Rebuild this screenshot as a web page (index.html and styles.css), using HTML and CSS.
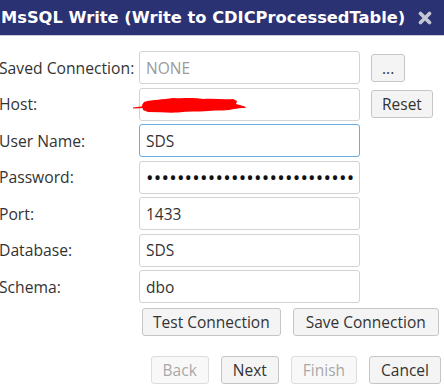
FILE: index.html
```html
<!DOCTYPE html>
<html>
<head>
<meta charset="utf-8">
<link rel="stylesheet" href="styles.css">
</head>
<body>
<div class="dialog">
  <div class="titlebar">
    <span class="title">MsSQL Write (Write to CDICProcessedTable)</span>
    <svg class="close" width="14" height="14" viewBox="0 0 14 14"><path d="M2.5 2.5 L11.5 11.5 M11.5 2.5 L2.5 11.5" stroke="#c4c7d3" stroke-width="3.6" stroke-linecap="round"/></svg>
  </div>
  <div class="form">
    <label class="lbl">Saved Connection:</label>
    <input class="field" type="text" placeholder="NONE">
    <button class="btn btn-small">...</button>

    <label class="lbl">Host:</label>
    <div class="host">
      <input class="field" type="text">
      <svg class="redact" width="114" height="22" viewBox="0 0 114 22"><path d="M0 13.5 C 4 13, 8 12.5, 12 12 L 12 14 C 8 14, 4 14.5, 0 14.5 Z" fill="#ff0000"/><path d="M11 8 C 20 5, 30 6, 40 4 C 50 5, 60 3, 70 5 C 80 4, 90 6, 100 5 L 104 7 L 103 10 C 107 11, 110 12, 113 13 L 112 14 C 108 14, 104 14.5, 101 15 C 95 17, 85 16, 75 17 C 65 18, 55 17, 45 18.5 C 35 19, 25 18, 15 18 L 10 16 L 9 11 Z" fill="#ff0000"/></svg>
    </div>
    <button class="btn btn-small">Reset</button>

    <label class="lbl">User Name:</label>
    <input class="field focused" type="text" value="SDS" autofocus>
    <span></span>

    <label class="lbl">Password:</label>
    <input class="field pw" type="password" value="abcdefghijklmnopqrstuvwxyz1">
    <span></span>

    <label class="lbl">Port:</label>
    <input class="field" type="text" value="1433">
    <span></span>

    <label class="lbl">Database:</label>
    <input class="field" type="text" value="SDS">
    <span></span>

    <label class="lbl">Schema:</label>
    <input class="field" type="text" value="dbo">
    <span></span>
  </div>
  <div class="conn-actions">
    <button class="btn">Test Connection</button>
    <button class="btn btn-wide">Save Connection</button>
  </div>
  <div class="wizard-actions">
    <button class="btn" disabled>Back</button>
    <button class="btn">Next</button>
    <button class="btn" disabled>Finish</button>
    <button class="btn">Cancel</button>
  </div>
</div>
</body>
</html>
```
FILE: styles.css
```css
html, body {
  margin: 0;
  padding: 0;
  background: #ffffff;
}
body {
  width: 444px;
  height: 386px;
  overflow: hidden;
  font-family: "Open Sans", "Noto Sans", "DejaVu Sans", sans-serif;
  color: #333333;
}
.dialog {
  display: flex;
  flex-direction: column;
}
.titlebar {
  height: 35px;
  background: #2b3273;
  border-bottom: 1px solid #c9ccd8;
  display: flex;
  align-items: center;
  padding-left: 1px;
}
.title {
  font-family: "DejaVu Sans", sans-serif;
  font-weight: bold;
  font-size: 16.3px;
  color: #ffffff;
  white-space: nowrap;
}
.close {
  margin-left: 13px;
  flex: none;
}
.form {
  display: grid;
  grid-template-columns: 139px 221px auto;
  grid-auto-rows: 33px;
  row-gap: 3.5px;
  padding-top: 15px;
  align-items: center;
}
.lbl {
  font-size: 15.7px;
  color: #333333;
  white-space: nowrap;
  margin-left: -1px;
}
.field {
  box-sizing: border-box;
  width: 221px;
  height: 33px;
  margin: 0;
  border: 1px solid #d3d3d3;
  border-radius: 3px;
  padding: 0 6px;
  font-family: "Open Sans", "Noto Sans", sans-serif;
  font-size: 15.5px;
  color: #333333;
  background: #ffffff;
  outline: none;
}
.field::placeholder {
  color: #9a9a9a;
}
.field.focused {
  border-color: #66aee6;
}
.field.pw {
  font-size: 20px;
  letter-spacing: 0.2px;
  color: #111111;
}
.host {
  position: relative;
  width: 221px;
  height: 33px;
}
.redact {
  position: absolute;
  left: -6px;
  top: 6px;
}
.btn {
  box-sizing: border-box;
  height: 28px;
  margin: 0;
  padding: 0 10px;
  border: 1px solid #c6c6c6;
  border-radius: 3px;
  background: #f4f4f4;
  font-family: "Open Sans", "Noto Sans", sans-serif;
  font-size: 15.5px;
  color: #333333;
  white-space: nowrap;
}
.btn-wide {
  padding: 0 12px;
}
.btn:disabled {
  color: #a8a8a8;
  border-color: #dddddd;
  background: #f8f8f8;
}
.btn-small {
  justify-self: start;
  margin-left: 11px;
}
.conn-actions {
  display: flex;
  gap: 12px;
  padding-left: 142px;
  margin-top: 5px;
}
.wizard-actions {
  display: flex;
  justify-content: flex-end;
  gap: 12px;
  padding-right: 3px;
  margin-top: 20px;
}
.wizard-actions .btn {
  padding: 0 11px;
}
```
